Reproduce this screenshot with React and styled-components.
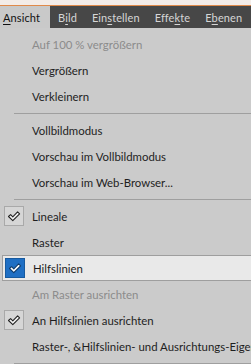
import React from "react";
import styled, { createGlobalStyle } from "styled-components";

const Global = createGlobalStyle`
  html, body { margin: 0; padding: 0; background: #cbcbcb; }
  body { font-family: Lato, "Open Sans", sans-serif; }
`;

const Page = styled.div`
  width: 251px;
  height: 364px;
  overflow: hidden;
  background: #cbcbcb;
  display: flex;
  flex-direction: column;
`;

const TopStrip = styled.div`
  height: 5px;
  background: #f3ece8;
  border-bottom: 1px solid #e08a4a;
  flex: none;
`;

const MenuBar = styled.div`
  height: 22px;
  background: #474747;
  display: flex;
  align-items: stretch;
  flex: none;
`;

const BarItem = styled.div`
  display: flex;
  align-items: center;
  padding-left: ${(p) => (p.$first ? "3px" : "8px")};
  padding-right: ${(p) => (p.$first ? "10px" : "7px")};
  font-size: 11px;
  letter-spacing: 0.1px;
  color: ${(p) => (p.$active ? "#111" : "#d6d6d6")};
  background: ${(p) => (p.$active ? "#c9c9c9" : "transparent")};
  white-space: nowrap;
  u { text-decoration: underline; text-underline-offset: 2px; }
`;

const Menu = styled.div`
  display: flex;
  flex-direction: column;
  padding-top: 3px;
`;

const Row = styled.div`
  height: 26px;
  box-sizing: border-box;
  display: flex;
  align-items: center;
  margin-left: ${(p) => (p.$hl ? "2px" : "0")};
  padding-left: ${(p) => (p.$hl ? "2px" : "4px")};
  background: ${(p) => (p.$hl ? "#e9e9e9" : "transparent")};
  border: ${(p) => (p.$hl ? "1px solid #9e9e9e" : "none")};
  border-right: none;
  font-size: 11.4px;
  color: ${(p) => (p.$disabled ? "#8c8c8c" : "#1e1e1e")};
  white-space: nowrap;
`;

const CheckSlot = styled.div`
  width: 20px;
  height: 20px;
  flex: none;
  margin-right: 8px;
  box-sizing: border-box;
  display: flex;
  align-items: center;
  justify-content: center;
  ${(p) =>
    p.$on === "blue"
      ? "background: #1f6fc4; border: 1px solid #175a9f;"
      : p.$on
      ? "background: #d6d6d6; border: 1px solid #a9a9a9;"
      : ""}
`;

const Separator = styled.div`
  height: 8px;
  display: flex;
  align-items: center;
  padding-left: 14px;
  &::after {
    content: "";
    flex: 1;
    height: 1px;
    background: #9f9f9f;
  }
`;

const Check = ({ blue }) => (
  <svg width="16" height="16" viewBox="0 0 16 16">
    <path
      d="M2.5 8.5 L4.6 6.6 L6.8 8.8 L11.6 3.8 L13.6 5.8 L6.8 12.6 Z"
      fill={blue ? "#ffffff" : "#f4f4f4"}
      stroke={blue ? "#0d3a6b" : "#222"}
      strokeWidth="1.1"
      strokeLinejoin="round"
    />
  </svg>
);

const items = [
  { t: "Auf 100 % vergrößern", d: true },
  { t: "Vergrößern" },
  { t: "Verkleinern" },
  { sep: true },
  { t: "Vollbildmodus" },
  { t: "Vorschau im Vollbildmodus" },
  { t: "Vorschau im Web-Browser..." },
  { sep: true },
  { t: "Lineale", c: true },
  { t: "Raster" },
  { t: "Hilfslinien", c: "blue", hl: true },
  { t: "Am Raster ausrichten", d: true },
  { t: "An Hilfslinien ausrichten", c: true },
  { t: "Raster-, &Hilfslinien- und Ausrichtungs-Eigenschaften..." },
  { sep: true },
];

export default function App() {
  return (
    <Page>
      <Global />
      <TopStrip />
      <MenuBar>
        <BarItem $first $active>
          <u>A</u>nsicht
        </BarItem>
        <BarItem>
          B<u>i</u>ld
        </BarItem>
        <BarItem>
          Ein<u>s</u>tellen
        </BarItem>
        <BarItem>
          Effe<u>k</u>te
        </BarItem>
        <BarItem>
          E<u>b</u>enen
        </BarItem>
      </MenuBar>
      <Menu>
        {items.map((it, i) =>
          it.sep ? (
            <Separator key={i} />
          ) : (
            <Row key={i} $disabled={it.d} $hl={it.hl}>
              <CheckSlot $on={it.c}>{it.c && <Check blue={it.c === "blue"} />}</CheckSlot>
              {it.t}
            </Row>
          )
        )}
      </Menu>
    </Page>
  );
}
